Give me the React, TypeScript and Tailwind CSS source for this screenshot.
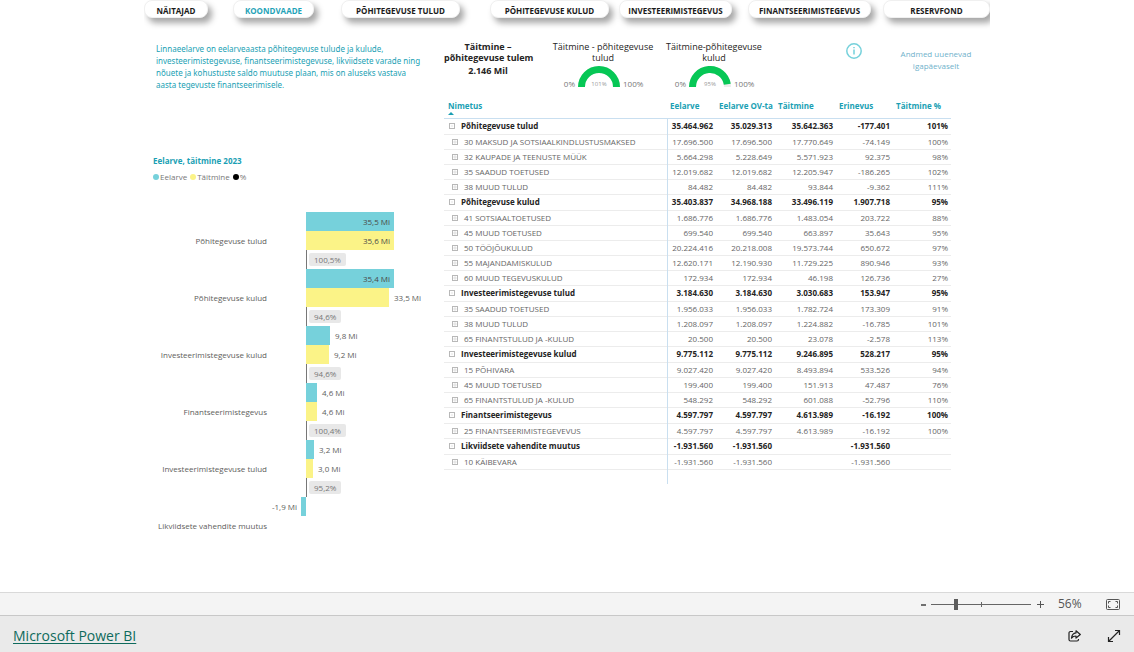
import React, { useState } from "react";

const tabs = [
  { label: "NÄITAJAD", box: "w-16" },
  { label: "KOONDVAADE", box: "w-[81px] ml-[25px]", active: true },
  { label: "PÕHITEGEVUSE TULUD", box: "w-[119px] ml-[27px]" },
  { label: "PÕHITEGEVUSE KULUD", box: "w-[119px] ml-[30px]" },
  { label: "INVESTEERIMISTEGEVUS", box: "w-[113px] ml-[10px]" },
  { label: "FINANTSEERIMISTEGEVUS", box: "w-[123px] ml-[16px]" },
  { label: "RESERVFOND", box: "w-[107px] ml-[12px]" },
];

type Row = { name: string; group?: boolean; values: string[] };

const rows: Row[] = [
  { name: "Põhitegevuse tulud", group: true, values: ["35.464.962", "35.029.313", "35.642.363", "-177.401", "101%"] },
  { name: "30 MAKSUD JA SOTSIAALKINDLUSTUSMAKSED", values: ["17.696.500", "17.696.500", "17.770.649", "-74.149", "100%"] },
  { name: "32 KAUPADE JA TEENUSTE MÜÜK", values: ["5.664.298", "5.228.649", "5.571.923", "92.375", "98%"] },
  { name: "35 SAADUD TOETUSED", values: ["12.019.682", "12.019.682", "12.205.947", "-186.265", "102%"] },
  { name: "38 MUUD TULUD", values: ["84.482", "84.482", "93.844", "-9.362", "111%"] },
  { name: "Põhitegevuse kulud", group: true, values: ["35.403.837", "34.968.188", "33.496.119", "1.907.718", "95%"] },
  { name: "41 SOTSIAALTOETUSED", values: ["1.686.776", "1.686.776", "1.483.054", "203.722", "88%"] },
  { name: "45 MUUD TOETUSED", values: ["699.540", "699.540", "663.897", "35.643", "95%"] },
  { name: "50 TÖÖJÕUKULUD", values: ["20.224.416", "20.218.008", "19.573.744", "650.672", "97%"] },
  { name: "55 MAJANDAMISKULUD", values: ["12.620.171", "12.190.930", "11.729.225", "890.946", "93%"] },
  { name: "60 MUUD TEGEVUSKULUD", values: ["172.934", "172.934", "46.198", "126.736", "27%"] },
  { name: "Investeerimistegevuse tulud", group: true, values: ["3.184.630", "3.184.630", "3.030.683", "153.947", "95%"] },
  { name: "35 SAADUD TOETUSED", values: ["1.956.033", "1.956.033", "1.782.724", "173.309", "91%"] },
  { name: "38 MUUD TULUD", values: ["1.208.097", "1.208.097", "1.224.882", "-16.785", "101%"] },
  { name: "65 FINANTSTULUD JA -KULUD", values: ["20.500", "20.500", "23.078", "-2.578", "113%"] },
  { name: "Investeerimistegevuse kulud", group: true, values: ["9.775.112", "9.775.112", "9.246.895", "528.217", "95%"] },
  { name: "15 PÕHIVARA", values: ["9.027.420", "9.027.420", "8.493.894", "533.526", "94%"] },
  { name: "45 MUUD TOETUSED", values: ["199.400", "199.400", "151.913", "47.487", "76%"] },
  { name: "65 FINANTSTULUD JA -KULUD", values: ["548.292", "548.292", "601.088", "-52.796", "110%"] },
  { name: "Finantseerimistegevus", group: true, values: ["4.597.797", "4.597.797", "4.613.989", "-16.192", "100%"] },
  { name: "25 FINANTSEERIMISTEGEVEVUS", values: ["4.597.797", "4.597.797", "4.613.989", "-16.192", "100%"] },
  { name: "Likviidsete vahendite muutus", group: true, values: ["-1.931.560", "-1.931.560", "", "-1.931.560", ""] },
  { name: "10 KÄIBEVARA", values: ["-1.931.560", "-1.931.560", "", "-1.931.560", ""] },
];

type Category = { name: string; budget: number; actual?: number; ratio?: string };

const categories: Category[] = [
  { name: "Põhitegevuse tulud", budget: 35.5, actual: 35.6, ratio: "100,5%" },
  { name: "Põhitegevuse kulud", budget: 35.4, actual: 33.5, ratio: "94,6%" },
  { name: "Investeerimistegevuse kulud", budget: 9.8, actual: 9.2, ratio: "94,6%" },
  { name: "Finantseerimistegevus", budget: 4.6, actual: 4.6, ratio: "100,4%" },
  { name: "Investeerimistegevuse tulud", budget: 3.2, actual: 3.0, ratio: "95,2%" },
  { name: "Likviidsete vahendite muutus", budget: -1.9 },
];

const PX_PER_MILLION = 2.48;

function Bar({ value, color }: { value?: number; color: string }) {
  if (value === undefined) return <div className="h-[19px]" />;
  const text = value.toFixed(1).replace(".", ",") + " Mi";
  const width = Math.round(Math.abs(value) * PX_PER_MILLION);
  const negative = value < 0;
  const inside = value > 35;
  return (
    <div className="flex h-[19px] items-stretch">
      <div className="flex w-[39px] items-center justify-end gap-1">
        {negative && (
          <>
            <span className="whitespace-nowrap">{text}</span>
            <div className={`h-full shrink-0 ${color}`} style={{ width }} />
          </>
        )}
      </div>
      {!negative && (
        <div className="flex items-center gap-[5px]">
          <div className={`flex h-full items-center justify-end ${color}`} style={{ width }}>
            {inside && <span className="pr-1 text-[#4a4a48]">{text}</span>}
          </div>
          {!inside && <span>{text}</span>}
        </div>
      )}
    </div>
  );
}

function BarChart() {
  return (
    <section className="text-[8px] leading-[11px] text-[#605e5c]">
      <h2 className="pl-[9px] font-bold text-[#1a9fb4]">Eelarve, täitmine 2023</h2>
      <ul className="mt-[5px] flex items-center gap-[3px] pl-[9px] text-[#777]">
        <li className="flex items-center gap-px"><i className="size-[6px] rounded-full bg-[#76d1db]" />Eelarve</li>
        <li className="flex items-center gap-px"><i className="size-[6px] rounded-full bg-[#fbf387]" />Täitmine</li>
        <li className="flex items-center gap-px"><i className="size-[6px] rounded-full bg-black" />%</li>
      </ul>
      <div className="mt-[30px]">
        {categories.map((c) => (
          <div key={c.name} className="flex">
            <div className="flex h-[57px] w-[123px] items-center justify-end whitespace-nowrap">{c.name}</div>
            <div>
              <Bar value={c.budget} color="bg-[#76d1db]" />
              <Bar value={c.actual} color="bg-[#fbf387]" />
              {c.ratio && (
                <div className="ml-[39px] flex h-[19px] items-center border-l border-[#777] pl-[2px]">
                  <span className="rounded-xs bg-[#e8e8e8] px-[5px] py-px text-[#777]">{c.ratio}</span>
                </div>
              )}
            </div>
          </div>
        ))}
      </div>
    </section>
  );
}

function Gauge({ title, value, className }: { title: [string, string]; value: number; className: string }) {
  const angle = Math.PI * (1 - Math.min(value, 100) / 100);
  const x = 21 + 17.5 * Math.cos(angle);
  const y = 21 - 17.5 * Math.sin(angle);
  return (
    <div className={`flex flex-col items-center ${className}`}>
      <h3 className="text-center text-[9px] leading-[11px] whitespace-nowrap text-[#252423]">
        {title[0]}
        <br />
        {title[1]}
      </h3>
      <div className="mt-[3px] flex items-end gap-[3px] text-[8px] leading-[9px] text-[#777]">
        <span className="w-[19px] text-right">0%</span>
        <svg className="h-[22px] w-[42px]" viewBox="0 0 42 22" fill="none">
          <path d="M3.5 21a17.5 17.5 0 0 1 35 0" stroke="#ededed" strokeWidth="7" />
          <path d={`M3.5 21A17.5 17.5 0 0 1 ${x} ${y}`} stroke="#06c755" strokeWidth="7" />
          <text x="21" y="20" fontSize="6" textAnchor="middle" fill="#999">{value}%</text>
        </svg>
        <span className="w-[27px]">100%</span>
      </div>
    </div>
  );
}

function Toggle({ group }: { group?: boolean }) {
  return (
    <button type="button" aria-label={group ? "Ahenda" : "Laienda"} className="shrink-0">
      <svg className="size-[6px]" viewBox="0 0 6 6" fill="none" stroke="#b8b8b8">
        <rect x=".5" y=".5" width="5" height="5" />
        <path d={group ? "M2 3h2" : "M1 3h4M3 1v4"} strokeWidth=".4" />
      </svg>
    </button>
  );
}

function BudgetTable() {
  return (
    <table className="w-[507px] table-fixed border-collapse text-[8px] leading-[14px]">
      <colgroup>
        <col />
        <col className="w-[49px]" />
        <col className="w-[59px]" />
        <col className="w-[61px]" />
        <col className="w-[57px]" />
        <col className="w-[58px]" />
      </colgroup>
      <thead>
        <tr className="h-[18px] border-b border-[#c9dff0] text-left align-top leading-[12px] whitespace-nowrap text-[#1a9fb4]">
          <th className="pl-1">
            Nimetus
            <svg className="h-[3px] w-[6px]" viewBox="0 0 6 3" fill="#1a9fb4"><path d="M0 3 3 0l3 3z" /></svg>
          </th>
          {["Eelarve", "Eelarve OV-ta", "Täitmine", "Erinevus", "Täitmine %"].map((h) => (
            <th key={h} className="pl-[3px]">{h}</th>
          ))}
        </tr>
      </thead>
      <tbody>
        {rows.map((r, i) => (
          <tr
            key={i}
            className={`border-b border-[#ececec] ${r.group ? "h-4 font-bold text-[#252423]" : "h-[15px] text-[#666]"}`}
          >
            <td className="border-r border-r-[#c9dff0]">
              <div className={`flex items-center whitespace-nowrap ${r.group ? "gap-[6px] pl-[5px]" : "gap-[6px] pl-[8px]"}`}>
                <Toggle group={r.group} />
                {r.name}
              </div>
            </td>
            {r.values.map((v, j) => (
              <td key={j} className="pr-[3px] text-right">{v}</td>
            ))}
          </tr>
        ))}
      </tbody>
      <tfoot>
        <tr className="h-[15px]">
          <td className="border-r border-[#c9dff0]" />
          <td colSpan={5} />
        </tr>
      </tfoot>
    </table>
  );
}

function ZoomBar() {
  const [zoom, setZoom] = useState(56);
  return (
    <div className="flex h-[23px] items-center justify-end border-t border-[#d9d9d9] bg-[#f4f4f4] pr-[14px] text-[#555]">
      <button type="button" aria-label="Suumi välja" onClick={() => setZoom(Math.max(10, zoom - 10))}>
        <svg className="size-[9px]" viewBox="0 0 9 9"><path d="M4 5h5" stroke="#444" strokeWidth="1.5" /></svg>
      </button>
      <div className="relative mx-[5px] flex w-[100px] items-center">
        <span className="absolute left-[50px] h-[5px] w-px bg-[#666]" />
        <input
          type="range"
          aria-label="Suum"
          min={10}
          max={200}
          value={zoom}
          onChange={(e) => setZoom(Number(e.target.value))}
          className="relative h-[11px] w-full appearance-none bg-[linear-gradient(#666,#666)] bg-[length:100%_1px] bg-center bg-no-repeat [&::-webkit-slider-thumb]:h-[11px] [&::-webkit-slider-thumb]:w-1 [&::-webkit-slider-thumb]:appearance-none [&::-webkit-slider-thumb]:bg-[#5c5c5c]"
        />
      </div>
      <button type="button" aria-label="Suumi sisse" onClick={() => setZoom(Math.min(200, zoom + 10))}>
        <svg className="size-[9px]" viewBox="0 0 9 9"><path d="M1 4.5h7M4.5 1v7" stroke="#555" /></svg>
      </button>
      <span className="ml-[13px] w-[48px] text-[12px] leading-4">{zoom}%</span>
      <button type="button" aria-label="Mahuta lehele">
        <svg className="h-[11px] w-[14px]" viewBox="0 0 14 11" fill="none" stroke="#555">
          <rect x=".5" y=".5" width="13" height="10" rx="1" />
          <path d="M2.5 4.500v-2h2M9.500 2.500h2v2M11.500 6.500v2h-2M4.500 8.500h-2v-2" />
        </svg>
      </button>
    </div>
  );
}

export default function App() {
  return (
    <div className="flex min-h-screen flex-col overflow-x-hidden bg-white font-['Open_Sans','Noto_Sans',sans-serif]">
      <main className="mx-auto w-full max-w-[846px] flex-1">
        <nav className="flex overflow-hidden pb-4">
          {tabs.map((t) => (
            <button
              key={t.label}
              type="button"
              className={`h-[18px] shrink-0 rounded-lg border border-[#f0f0f0] bg-white pt-[3px] text-[8px] leading-3 font-bold whitespace-nowrap shadow-[4px_5px_6px_rgba(0,0,0,0.35)] ${t.box} ${t.active ? "text-[#1fa3b8]" : "text-[#1b1b1b]"}`}
            >
              {t.label}
            </button>
          ))}
        </nav>
        <div className="flex">
          <div className="w-[300px] shrink-0 pt-[9px]">
            <p className="h-[112px] pl-3 font-['Noto_Sans','Open_Sans',sans-serif] text-[8px] leading-3 whitespace-nowrap text-[#1a9fb4]">
              Linnaeelarve on eelarveaasta põhitegevuse tulude ja kulude,
              <br />
              investeerimistegevuse, finantseerimistegevuse, likviidsete varade ning
              <br />
              nõuete ja kohustuste saldo muutuse plaan, mis on aluseks vastava
              <br />
              aasta tegevuste finantseerimisele.
            </p>
            <BarChart />
          </div>
          <div className="min-w-0 flex-1 pt-[7px]">
            <div className="flex h-[59px] items-start">
              <div className="w-[88px] text-center text-[9px] leading-[11px] font-bold whitespace-nowrap text-[#252423]">
                Täitmine –
                <br />
                põhitegevuse tulem
                <p className="mt-[2px]">2.146 Mil</p>
              </div>
              <Gauge className="ml-[16px] w-[110px]" title={["Täitmine - põhitegevuse", "tulud"]} value={101} />
              <Gauge className="ml-px w-[110px]" title={["Täitmine-põhitegevuse", "kulud"]} value={95} />
              <button type="button" aria-label="Info" className="ml-[77px] pt-[2px]">
                <svg className="size-4" viewBox="0 0 16 16" fill="none" stroke="#76d1db">
                  <circle cx="8" cy="8" r="7.200" strokeWidth="1.500" />
                  <path d="M8 6.500v5M8 4v1.300" strokeWidth="1.500" />
                </svg>
              </button>
              <p className="ml-[20px] w-[108px] pt-[7px] text-center text-[8px] leading-3 text-[#6fb2cb]">
                Andmed uuenevad
                <br />
                igapäevaselt
              </p>
            </div>
            <BudgetTable />
          </div>
        </div>
      </main>
      <ZoomBar />
      <footer className="flex h-[37px] items-center border-t border-[#c8c8c8] bg-[#eaeaea] pt-1 pr-[13px] pl-[13px]">
        <a href="#" className="flex-1 text-[14px] leading-5 text-[#0e6a5c] underline underline-offset-2">
          Microsoft Power BI
        </a>
        <button type="button" aria-label="Jaga">
          <svg className="h-3 w-[13px]" viewBox="0 0 13 12" fill="none" stroke="#222" strokeWidth="1.200" strokeLinejoin="round">
            <path d="M5 1.500H2.500A1.500 1.500 0 0 0 1 3v6.500A1.500 1.500 0 0 0 2.500 11H9a1.500 1.500 0 0 0 1.500-1.500V9" />
            <path d="M8 .8 12.300 4.500 8 8V6C5.800 6 4.500 6.700 3.500 8.200 3.800 5 5.300 3.100 8 2.900z" />
          </svg>
        </button>
        <button type="button" aria-label="Täisekraan" className="ml-[26px]">
          <svg className="size-[14px]" viewBox="0 0 14 14" fill="none" stroke="#222" strokeWidth="1.200">
            <path d="M1.500 12.500l11-11M8 1.500h4.500V6M1.500 8v4.500H6" />
          </svg>
        </button>
      </footer>
    </div>
  );
}
